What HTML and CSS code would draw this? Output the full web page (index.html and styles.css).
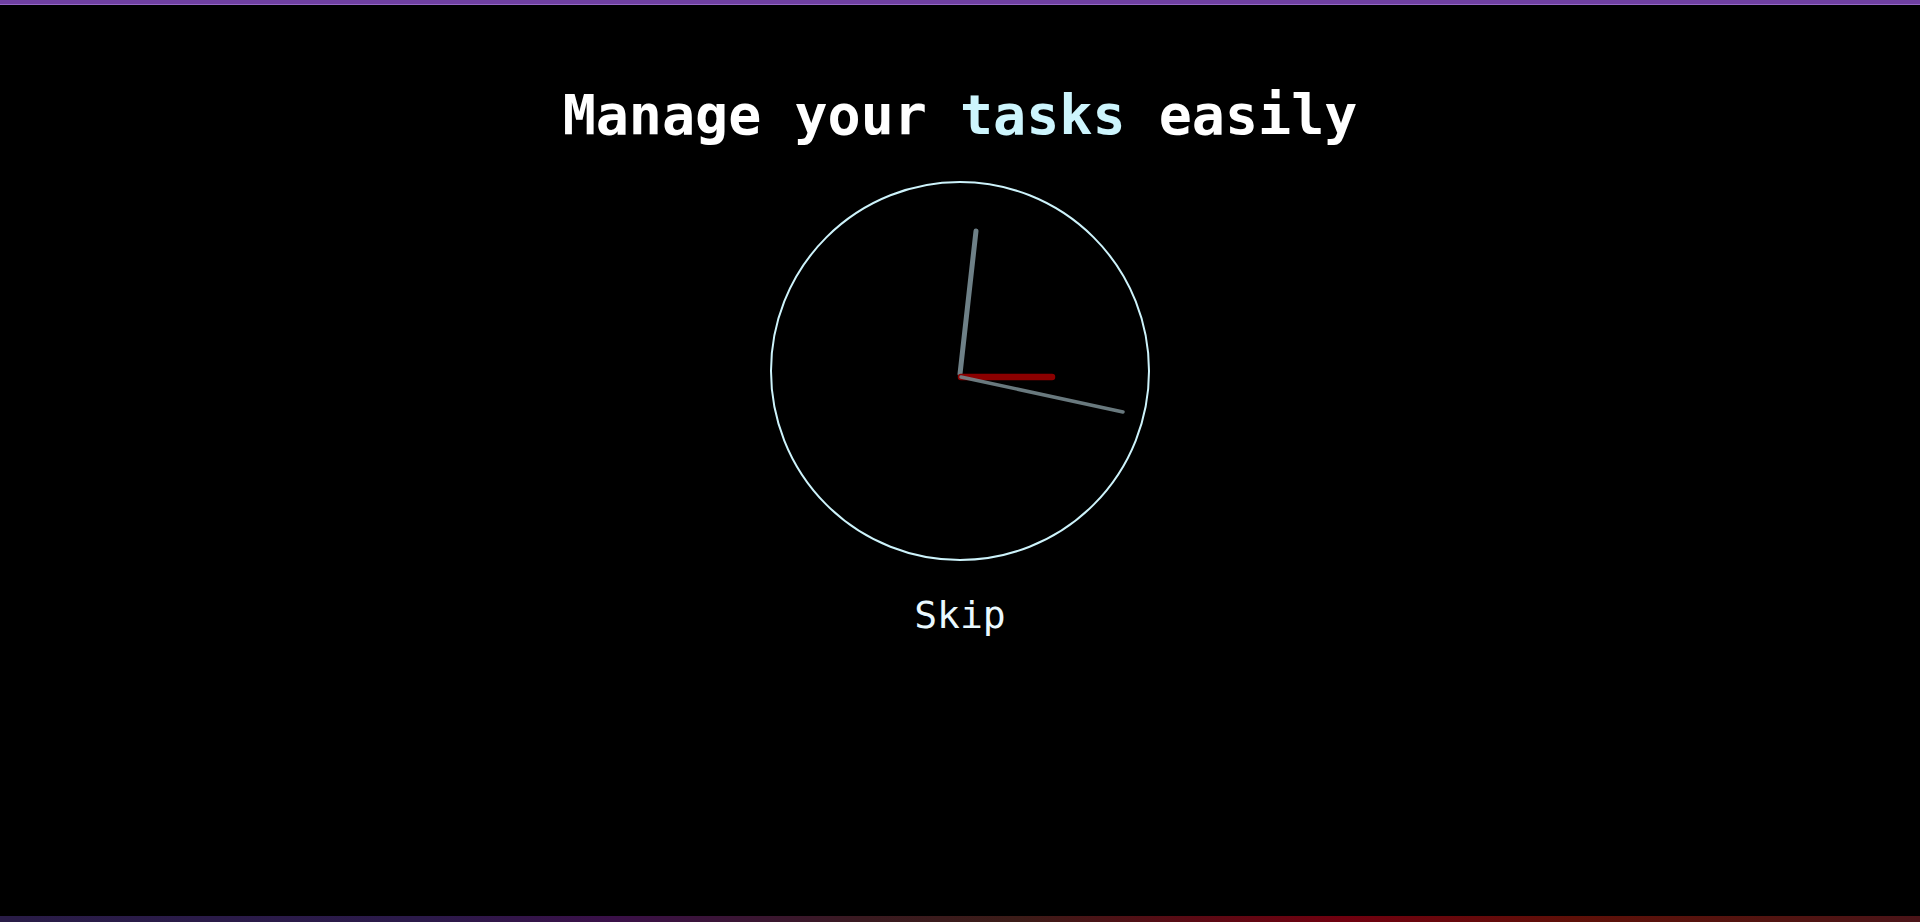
FILE: index.html
```html
<!DOCTYPE html>
<html lang="en">
<head>
<meta charset="utf-8">
<title>Manage your tasks easily</title>
<link rel="stylesheet" href="styles.css">
</head>
<body>
<div class="topbar"></div>
<main class="screen">
  <h1 class="title">Manage your <span class="accent">tasks</span> easily</h1>
  <svg class="clock" width="380" height="380" viewBox="0 0 380 380">
    <circle cx="190" cy="190" r="189" fill="none" stroke="#cdf3fb" stroke-width="2"/>
    <line x1="190" y1="193" x2="206" y2="50" stroke="#6e8087" stroke-width="5" stroke-linecap="round"/>
    <line x1="191" y1="196" x2="282" y2="196" stroke="#8b0000" stroke-width="6.5" stroke-linecap="round"/>
    <line x1="191" y1="196" x2="353" y2="231" stroke="#74868c" stroke-opacity="0.9" stroke-width="3.5" stroke-linecap="round"/>
  </svg>
  <a class="skip" href="#">Skip</a>
</main>
<div class="bottombar"></div>
</body>
</html>
```

FILE: styles.css
```css
html, body {
  margin: 0;
  padding: 0;
  height: 100%;
  background: #000;
  overflow: hidden;
}
body {
  display: flex;
  flex-direction: column;
  font-family: "DejaVu Sans Mono", "Liberation Mono", monospace;
}
.topbar {
  height: 4px;
  background: #6f40a1;
  border-bottom: 1px solid #9468c6;
  flex: none;
}
.screen {
  flex: 1;
  display: flex;
  flex-direction: column;
  align-items: center;
}
.title {
  margin: 75px 0 0;
  font-size: 55px;
  font-weight: bold;
  line-height: 70px;
  color: #ffffff;
  letter-spacing: 0;
}
.accent {
  color: #cdf5fd;
}
.clock {
  display: block;
  margin-top: 31px;
}
.skip {
  margin-top: 32px;
  font-size: 38px;
  line-height: 44px;
  color: #eaf9ff;
  text-decoration: none;
}
.bottombar {
  flex: none;
  height: 6px;
  background: linear-gradient(90deg, #291c47 0%, #2b1a4a 22%, #3a1048 32%, #3a1a20 45%, #3c1c18 53%, #5a0a14 62%, #70000f 70%, #5e1008 82%, #521410 92%, #4a1418 100%);
}
```
